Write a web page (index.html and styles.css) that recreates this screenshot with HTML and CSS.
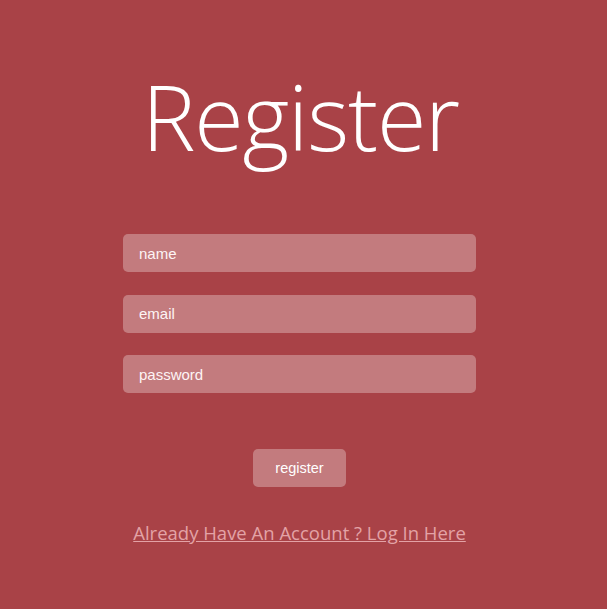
FILE: index.html
```html
<!DOCTYPE html>
<html lang="en">
<head>
<meta charset="utf-8">
<title>Register</title>
<link rel="stylesheet" href="styles.css">
</head>
<body>
<main class="page">
  <h1 class="title">Register</h1>
  <form class="form">
    <input class="field" type="text" placeholder="name">
    <input class="field" type="email" placeholder="email">
    <input class="field" type="password" placeholder="password">
    <button class="btn" type="button">register</button>
  </form>
  <a class="login-link" href="#">Already Have An Account ? Log In Here</a>
</main>
</body>
</html>
```
FILE: styles.css
```css
html, body {
  margin: 0;
  padding: 0;
  height: 100%;
}
body {
  background: #a94247;
  font-family: "Liberation Sans", Arial, sans-serif;
}
.page {
  display: flex;
  flex-direction: column;
  align-items: center;
  padding-top: 56px;
  padding-right: 8px;
}
.title {
  margin: 0 0 0 2px;
  font-family: "Open Sans", sans-serif;
  font-weight: 300;
  font-size: 90px;
  line-height: 120px;
  color: #ffffff;
  letter-spacing: -1.2px;
}
.form {
  display: flex;
  flex-direction: column;
  align-items: center;
  gap: 22.5px;
  margin-top: 58px;
  width: 353px;
}
.field {
  box-sizing: border-box;
  width: 353px;
  height: 38px;
  border: none;
  border-radius: 5px;
  background: rgba(255, 255, 255, 0.3);
  padding: 0 16px;
  font-family: "Liberation Sans", Arial, sans-serif;
  font-size: 15px;
  color: #ffffff;
  outline: none;
}
.field::placeholder {
  color: #fdf4f5;
  opacity: 1;
}
.btn {
  margin-top: 33.5px;
  width: 93px;
  height: 38px;
  border: none;
  border-radius: 5px;
  background: rgba(255, 255, 255, 0.3);
  color: #ffffff;
  font-family: "Liberation Sans", Arial, sans-serif;
  font-size: 14.5px;
  cursor: pointer;
}
.login-link {
  margin-top: 33px;
  font-family: "Open Sans", sans-serif;
  font-size: 18.5px;
  color: #e3a2a6;
  text-decoration: underline;
}
```
